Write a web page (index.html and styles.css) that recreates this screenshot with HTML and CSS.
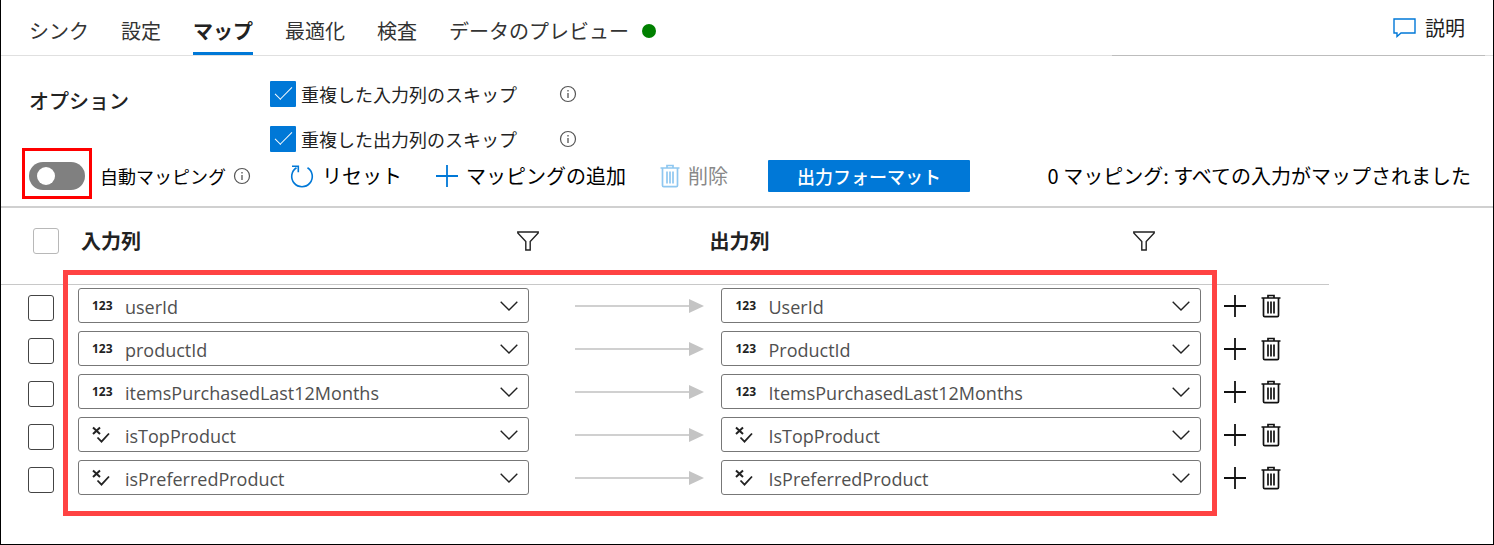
FILE: index.html
```html
<!DOCTYPE html>
<html lang="ja">
<head>
<meta charset="utf-8">
<meta name="viewport" content="width=device-width, initial-scale=1">
<title>マップ</title>
<link rel="stylesheet" href="styles.css">
</head>
<body>
<svg class="sprite" aria-hidden="true">
  <symbol id="info" viewBox="0 0 18 18"><circle cx="9" cy="9" r="7.5" fill="none" stroke="currentColor" stroke-width="1.2"/><path d="M9 8v5M9 5v1.5" fill="none" stroke="currentColor" stroke-width="1.3"/></symbol>
  <symbol id="plus" viewBox="0 0 22 22"><path d="M11 0v22M0 11h22" fill="none" stroke="currentColor" stroke-width="1.8"/></symbol>
  <symbol id="trash" viewBox="0 0 20 24"><path d="M.5 4h19M7 4V1.500h6V4M2.500 4v17.500a1.200 1.200 0 0 0 1.200 1.200h12.600a1.200 1.200 0 0 0 1.200-1.200V4M7 7.500v12M10 7.500v12M13 7.500v12" fill="none" stroke="currentColor" stroke-width="1.700"/></symbol>
  <symbol id="filter" viewBox="0 0 22 20"><path d="M.8 1h20.400v1L13.200 10.500V19H8.800V10.500L.8 2z" fill="none" stroke="currentColor" stroke-width="1.400"/></symbol>
  <symbol id="chevron" viewBox="0 0 18 10"><path d="M.7.7 9 9 17.300.7" fill="none" stroke="currentColor" stroke-width="1.400"/></symbol>
  <symbol id="bool" viewBox="0 0 18 18"><path d="M1 1.500 8 8M8 1.500 1 8" fill="none" stroke="currentColor" stroke-width="2"/><path d="M5.500 11.500l4 4.200L17 7.500" fill="none" stroke="currentColor" stroke-width="1.800"/></symbol>
</svg>
<div class="page">
  <header class="tabs">
    <nav class="tab-list">
      <a class="tab" href="#sink">シンク</a>
      <a class="tab" href="#settings">設定</a>
      <a class="tab tab-active" href="#map" aria-current="page">マップ</a>
      <a class="tab" href="#optimize">最適化</a>
      <a class="tab" href="#inspect">検査</a>
      <a class="tab" href="#preview">データのプレビュー<span class="status-dot"></span></a>
    </nav>
    <button class="describe" type="button"><svg class="comment-icon" viewBox="0 0 23 20"><path d="M1 1h21v14H8l-4 3.500V15H1z" fill="none" stroke="currentColor" stroke-width="1.400"/></svg>説明</button>
  </header>

  <section class="options">
    <h2 class="options-title">オプション</h2>
    <div class="option-list">
      <div class="option"><label class="option-label"><input class="check check-blue" type="checkbox" checked>重複した入力列のスキップ</label><svg class="info"><use href="#info"/></svg></div>
      <div class="option"><label class="option-label"><input class="check check-blue" type="checkbox" checked>重複した出力列のスキップ</label><svg class="info"><use href="#info"/></svg></div>
    </div>
  </section>

  <div class="toolbar">
    <div class="auto">
      <span class="switch-frame"><input class="switch" id="auto-map" type="checkbox" role="switch"></span>
      <label class="auto-label" for="auto-map">自動マッピング</label>
      <svg class="info"><use href="#info"/></svg>
    </div>
    <button class="command command-reset" type="button"><svg class="reset-icon" viewBox="0 0 24 24"><path d="M17.500 3.700A10.300 10.300 0 1 1 6.500 3.700M2 2.200h6.300v6" fill="none" stroke="currentColor" stroke-width="1.600"/></svg>リセット</button>
    <button class="command command-add" type="button"><svg class="plus-icon"><use href="#plus"/></svg>マッピングの追加</button>
    <button class="command command-delete" type="button" disabled><svg class="trash-icon"><use href="#trash"/></svg>削除</button>
    <button class="primary" type="button">出力フォーマット</button>
    <p class="summary">0 マッピング: すべての入力がマップされました</p>
  </div>

  <div class="mapping">
    <table class="grid">
      <colgroup><col class="col-check"><col class="col-in"><col class="col-arrow"><col class="col-out"><col class="col-actions"></colgroup>
      <thead>
        <tr>
          <th class="head-check"><input class="check check-light" type="checkbox" aria-label="すべて選択"></th>
          <th><div class="head head-in">入力列<button class="icon-button" type="button" aria-label="フィルター"><svg class="filter-icon"><use href="#filter"/></svg></button></div></th>
          <th></th>
          <th><div class="head head-out">出力列<button class="icon-button" type="button" aria-label="フィルター"><svg class="filter-icon"><use href="#filter"/></svg></button></div></th>
          <th></th>
        </tr>
      </thead>
      <tbody id="rows"></tbody>
    </table>
    <div class="highlight"></div>
  </div>
</div>
<script src="app.js"></script>
</body>
</html>
```
FILE: styles.css
```css
* { box-sizing: border-box; }

body {
  margin: 0;
  background: #fff;
  color: #222;
  font-family: "Noto Sans CJK JP", sans-serif;
  font-size: 20px;
  line-height: 28px;
}

button {
  padding: 0;
  border: 0;
  background: none;
  color: inherit;
  font: inherit;
}

svg { flex: none; }
.sprite { position: absolute; width: 0; height: 0; }

.page {
  min-height: 100vh;
  border: 1px solid #000;
  border-top: 0;
}

.tabs {
  position: relative;
  display: flex;
  justify-content: space-between;
  padding: 0 28px;
  border-bottom: 1px solid #e0e0e0;
}

.tabs::after {
  content: "";
  position: absolute;
  right: 8px;
  bottom: -1px;
  width: 25%;
  height: 1px;
  background: #bdbdbd;
}

.tab-list { display: flex; gap: 32px; }

.tab {
  display: flex;
  align-items: center;
  padding: 17px 0 7px;
  border-bottom: 3px solid transparent;
  color: #333;
  text-decoration: none;
  white-space: nowrap;
}

.tab-active {
  border-color: #0078d7;
  color: #222;
  font-weight: 700;
}

.status-dot {
  width: 14px;
  height: 14px;
  margin-left: 13px;
  border-radius: 50%;
  background: #008000;
}

.describe {
  display: flex;
  align-items: center;
  gap: 9px;
}

.comment-icon { width: 23px; height: 20px; color: #0078d7; }

.options {
  display: flex;
  padding: 25px 28px 0;
}

.options-title {
  width: 241px;
  margin: 6px 0 0;
  font-size: 20px;
  font-weight: 500;
}

.option-list { display: grid; gap: 19px; }
.option { display: flex; align-items: center; gap: 42px; }

.option-label {
  display: flex;
  align-items: center;
  gap: 5px;
  font-size: 18px;
  line-height: 26px;
}

.info { width: 18px; height: 18px; color: #555; }

.check {
  display: block;
  width: 26px;
  height: 26px;
  margin: 0;
  border: 1px solid #444;
  border-radius: 3px;
  appearance: none;
  background: #fff;
}

.check-light { border-color: #b8b8b8; }
.check-blue { border: 0; border-radius: 1px; background: #0078d7; }

.check-blue::after {
  content: "";
  display: block;
  width: 16px;
  height: 7px;
  margin: 6px 5px;
  border: solid #fff;
  border-width: 0 0 1px 1px;
  transform: rotate(-45deg);
}

.toolbar {
  display: flex;
  align-items: center;
  padding: 8px 22px 14px 28px;
  border-bottom: 2px solid #d0d0d0;
  color: #000;
  white-space: nowrap;
}

.auto { display: flex; align-items: center; gap: 7px; }
.auto-label { margin-left: 8px; font-size: 18px; }

.switch-frame { position: relative; }

.switch-frame::after {
  content: "";
  position: absolute;
  inset: -14px -7px -9px;
  border: 3px solid #f00;
  pointer-events: none;
}

.switch {
  display: block;
  width: 56px;
  height: 28px;
  margin: 0;
  padding: 5px 8px;
  border-radius: 14px;
  appearance: none;
  background: #808080;
}

.switch::before {
  content: "";
  display: block;
  width: 18px;
  height: 18px;
  border-radius: 50%;
  background: #fff;
}

.command { display: flex; align-items: center; gap: 8px; }
.command-reset { margin-left: 39px; }
.command-add { margin-left: 34px; }
.command-delete { margin-left: 34px; color: #888; }
.reset-icon { width: 24px; height: 24px; color: #0078d7; }
.plus-icon { width: 22px; height: 22px; color: #0078d7; }
.trash-icon { width: 20px; height: 24px; }
.command-delete .trash-icon { color: #8fc7f0; }

.primary {
  width: 202px;
  height: 32px;
  margin-left: 40px;
  border-radius: 1px;
  background: #0078d7;
  color: #fff;
  font-size: 18px;
  font-weight: 500;
}

.summary { margin: 0 0 0 auto; }

.mapping { position: relative; }

.grid {
  width: 89%;
  border-collapse: collapse;
  table-layout: fixed;
}

.grid th,
.grid td { padding: 0; text-align: left; }

.grid thead tr {
  height: 76px;
  border-bottom: 1px solid #c8c8c8;
}

.grid th { padding-bottom: 10px; }
.grid tbody tr { height: 43px; }

.col-check { width: 77px; }
.col-in { width: 34%; }
.col-arrow { width: 192px; }
.col-actions { width: 128px; }

.grid th.head-check { padding-left: 32px; }
.cell-check { display: block; padding: 4px 0 0 27px; }
.head { display: flex; align-items: center; justify-content: space-between; }
.head-in { margin: 0 -10px 0 3px; }
.head-out { margin: 0 46px 0 -12px; }
.icon-button { display: block; }
.filter-icon { display: block; width: 22px; height: 20px; color: #222; }

.field {
  display: flex;
  align-items: center;
  height: 35px;
  padding: 0 10px 0 13px;
  border: 1px solid #777;
  border-radius: 3px;
}

.type {
  width: 33px;
  color: #222;
  font: 700 12px/20px "Open Sans", sans-serif;
}

.bool-icon { display: block; width: 18px; height: 18px; }

.field select {
  flex: 1;
  min-width: 0;
  padding: 3px 0 0;
  border: 0;
  appearance: none;
  background: none;
  color: #505050;
  font: 18px/26px "Open Sans", sans-serif;
}

.chevron-icon { width: 18px; height: 10px; color: #222; pointer-events: none; }

.arrow {
  display: flex;
  align-items: center;
  padding: 0 17px 0 46px;
}

.arrow::before {
  content: "";
  flex: 1;
  height: 2px;
  background: #d0d0d0;
}

.arrow::after {
  content: "";
  border: solid transparent;
  border-width: 7px 0 7px 15px;
  border-left-color: #c4c4c4;
}

.actions { display: flex; align-items: center; gap: 15px; padding-left: 23px; color: #111; }
.actions svg { display: block; }
.actions .plus-icon { color: #111; }

.highlight {
  position: absolute;
  top: 62px;
  left: 62px;
  width: calc(89% - 174px);
  bottom: -17px;
  border: 5px solid #ff4343;
  pointer-events: none;
}
```
FILE: app.js
```js
const mappings = [
  ["number", "userId", "UserId"],
  ["number", "productId", "ProductId"],
  ["number", "itemsPurchasedLast12Months", "ItemsPurchasedLast12Months"],
  ["boolean", "isTopProduct", "IsTopProduct"],
  ["boolean", "isPreferredProduct", "IsPreferredProduct"],
];

const field = (type, name, label) => `
  <div class="field">
    <span class="type">${type === "number" ? "123" : '<svg class="bool-icon"><use href="#bool"/></svg>'}</span>
    <select aria-label="${label}"><option>${name}</option></select>
    <svg class="chevron-icon"><use href="#chevron"/></svg>
  </div>`;

document.getElementById("rows").innerHTML = mappings.map(([type, source, target]) => `
  <tr>
    <td><label class="cell-check"><input class="check" type="checkbox" aria-label="${source}"></label></td>
    <td>${field(type, source, "入力列")}</td>
    <td><div class="arrow"></div></td>
    <td>${field(type, target, "出力列")}</td>
    <td><div class="actions">
      <button class="icon-button" type="button" aria-label="追加"><svg class="plus-icon"><use href="#plus"/></svg></button>
      <button class="icon-button" type="button" aria-label="削除"><svg class="trash-icon"><use href="#trash"/></svg></button>
    </div></td>
  </tr>`).join("");
```
